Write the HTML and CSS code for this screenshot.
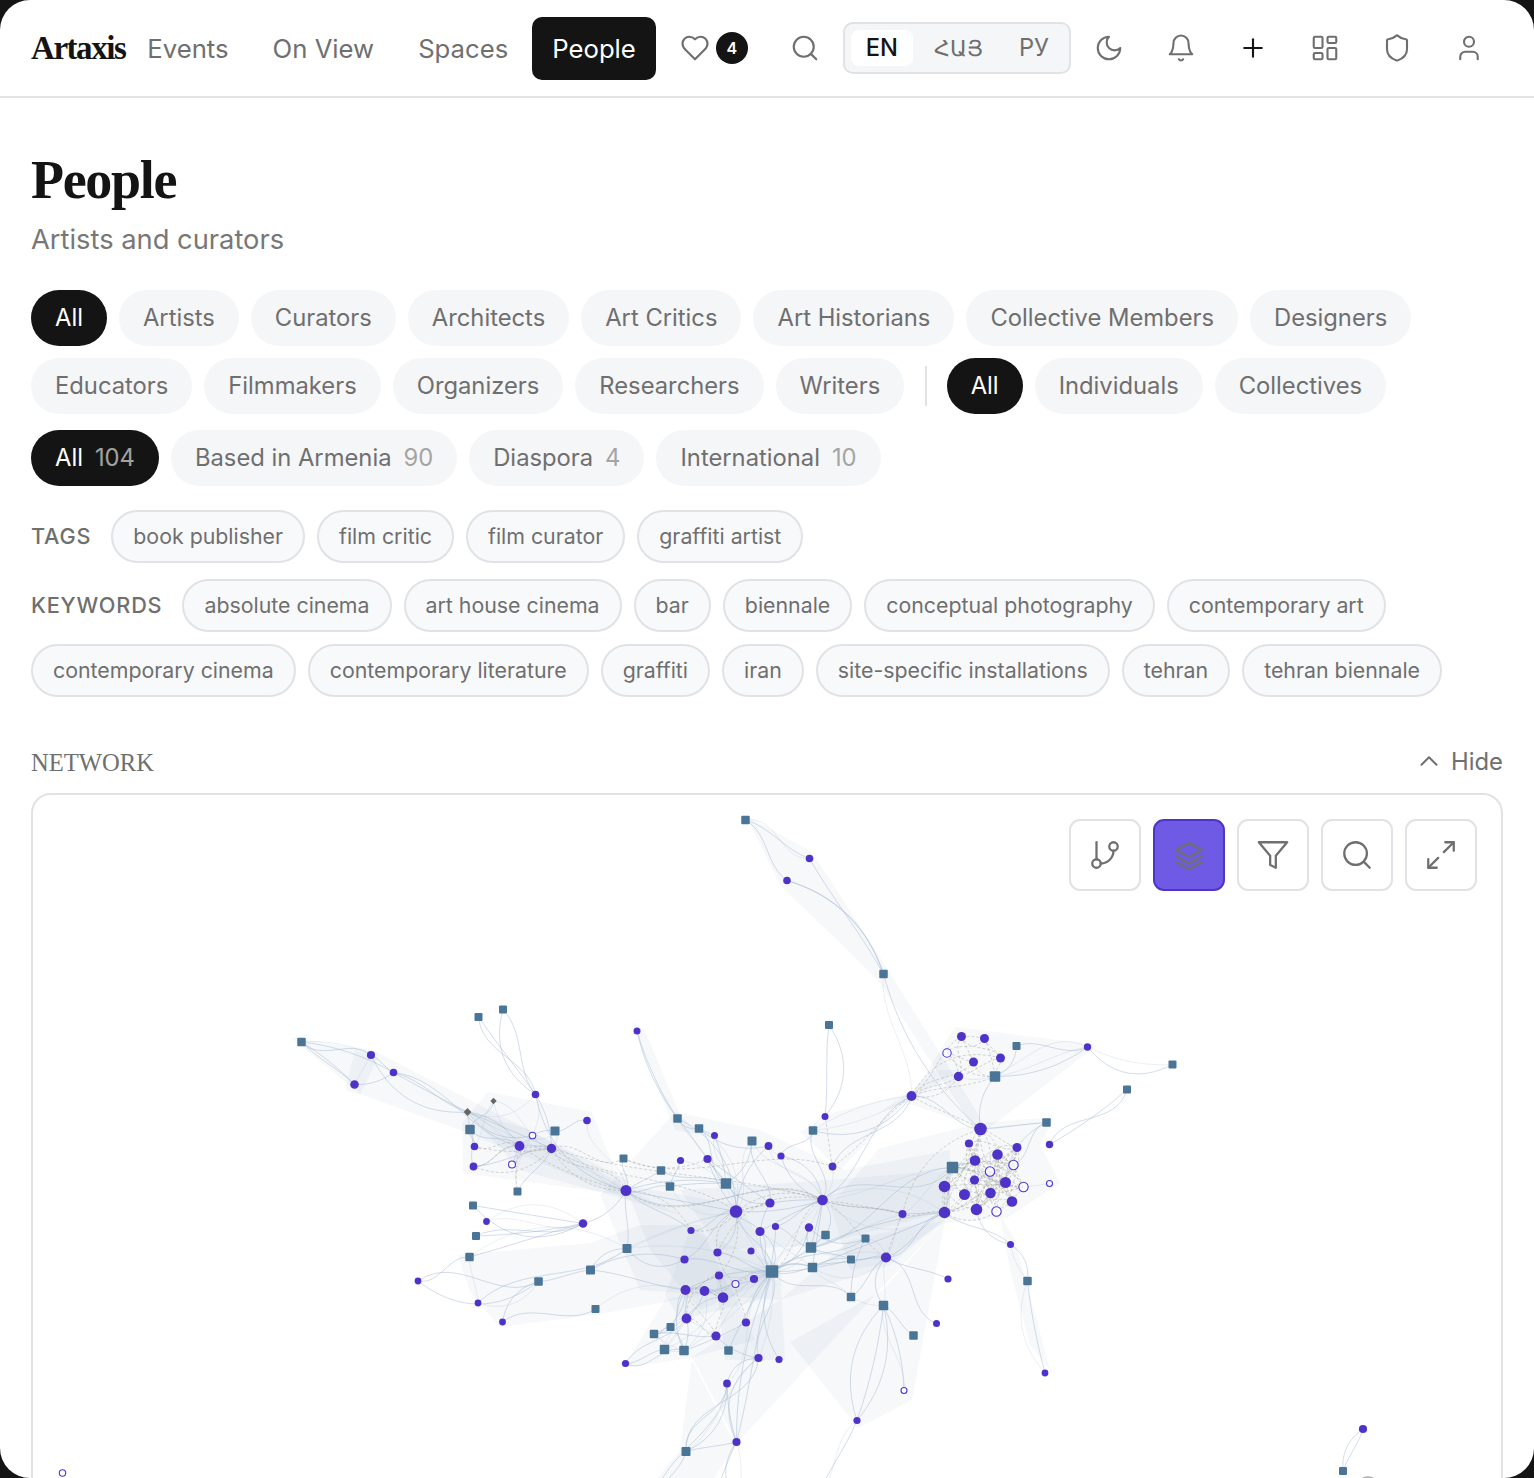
FILE: index.html
```html
<!DOCTYPE html>
<html lang="en">
<head>
<meta charset="utf-8">
<title>People – Artaxis</title>
<link rel="stylesheet" href="styles.css">
</head>
<body>
<div class="page">
  <header class="topbar">
    <a class="logo">Artaxis</a>
    <nav class="nav">
      <a class="nav-item">Events</a>
      <a class="nav-item">On View</a>
      <a class="nav-item">Spaces</a>
      <a class="nav-item active">People</a>
    </nav>
    <div class="fav">
      <svg class="icon" viewBox="0 0 24 24"><path d="M19 14c1.49-1.46 3-3.21 3-5.5A5.5 5.5 0 0 0 16.5 3c-1.76 0-3 .5-4.5 2-1.5-1.500-2.740-2-4.500-2A5.500 5.500 0 0 0 2 8.500c0 2.300 1.500 4.050 3 5.500l7 7Z"/></svg>
      <span class="badge">4</span>
    </div>
    <div class="actions">
      <button class="icon-btn"><svg class="icon" viewBox="0 0 24 24"><circle cx="11" cy="11" r="8"/><path d="m21 21-4.300-4.300"/></svg></button>
      <div class="lang">
        <span class="lang-item current">EN</span>
        <span class="lang-item hy">ՀԱՅ</span>
        <span class="lang-item">РУ</span>
      </div>
      <button class="icon-btn"><svg class="icon" viewBox="0 0 24 24"><path d="M12 3a6 6 0 0 0 9 9 9 9 0 1 1-9-9Z"/></svg></button>
      <button class="icon-btn"><svg class="icon" viewBox="0 0 24 24"><path d="M6 8a6 6 0 0 1 12 0c0 7 3 9 3 9H3s3-2 3-9"/><path d="M10.300 21a1.940 1.940 0 0 0 3.400 0"/></svg></button>
      <button class="icon-btn dark"><svg class="icon" viewBox="0 0 24 24"><path d="M5 12h14"/><path d="M12 5v14"/></svg></button>
      <button class="icon-btn"><svg class="icon" viewBox="0 0 24 24"><rect x="3" y="3" width="7" height="9" rx="1"/><rect x="14" y="3" width="7" height="5" rx="1"/><rect x="14" y="12" width="7" height="9" rx="1"/><rect x="3" y="16" width="7" height="5" rx="1"/></svg></button>
      <button class="icon-btn"><svg class="icon" viewBox="0 0 24 24"><path d="M20 13c0 5-3.500 7.500-7.660 8.950a1 1 0 0 1-.670-.010C7.500 20.500 4 18 4 13V6a1 1 0 0 1 1-1c2 0 4.500-1.200 6.240-2.720a1.170 1.170 0 0 1 1.520 0C14.510 3.810 17 5 19 5a1 1 0 0 1 1 1z"/></svg></button>
      <button class="icon-btn"><svg class="icon" viewBox="0 0 24 24"><path d="M19 21v-2a4 4 0 0 0-4-4H9a4 4 0 0 0-4 4v2"/><circle cx="12" cy="7" r="4"/></svg></button>
    </div>
  </header>

  <main class="content">
    <h1 class="title">People</h1>
    <p class="subtitle">Artists and curators</p>

    <div class="chip-row">
      <a class="chip on">All</a><a class="chip">Artists</a><a class="chip">Curators</a><a class="chip">Architects</a><a class="chip">Art Critics</a><a class="chip">Art Historians</a><a class="chip">Collective Members</a><a class="chip">Designers</a>
    </div>
    <div class="chip-row">
      <a class="chip">Educators</a><a class="chip">Filmmakers</a><a class="chip">Organizers</a><a class="chip">Researchers</a><a class="chip">Writers</a>
      <span class="divider"></span>
      <a class="chip on">All</a><a class="chip">Individuals</a><a class="chip">Collectives</a>
    </div>
    <div class="chip-row region">
      <a class="chip on">All<span class="count">104</span></a><a class="chip">Based in Armenia<span class="count">90</span></a><a class="chip">Diaspora<span class="count">4</span></a><a class="chip">International<span class="count">10</span></a>
    </div>

    <div class="tag-row tags">
      <span class="tag-label">TAGS</span>
      <a class="tag">book publisher</a><a class="tag">film critic</a><a class="tag">film curator</a><a class="tag">graffiti artist</a>
    </div>
    <div class="tag-row keywords">
      <span class="tag-label">KEYWORDS</span>
      <a class="tag">absolute cinema</a><a class="tag">art house cinema</a><a class="tag">bar</a><a class="tag">biennale</a><a class="tag">conceptual photography</a><a class="tag">contemporary art</a><a class="tag">contemporary cinema</a><a class="tag">contemporary literature</a><a class="tag">graffiti</a><a class="tag">iran</a><a class="tag">site-specific installations</a><a class="tag">tehran</a><a class="tag">tehran biennale</a>
    </div>

    <div class="section-head">
      <h2 class="section-title">NETWORK</h2>
      <button class="hide"><svg class="icon small" viewBox="0 0 24 24"><path d="m18 15-6-6-6 6"/></svg><span>Hide</span></button>
    </div>

    <section class="graph">
      <svg id="graph-svg" class="graph-svg" viewBox="33 795 1468 760" preserveAspectRatio="xMinYMin"></svg>
      <div class="tools">
        <button class="tool"><svg class="icon" viewBox="0 0 24 24"><path d="M6 3v12"/><circle cx="18" cy="6" r="3"/><circle cx="6" cy="18" r="3"/><path d="M18 9a9 9 0 0 1-9 9"/></svg></button>
        <button class="tool selected"><svg class="icon" viewBox="0 0 24 24"><path d="M12 3.500 3 8.500l9 5 9-5z"/><path d="m3 13 9 5 9-5"/><path d="m3 17 9 5 9-5"/></svg></button>
        <button class="tool"><svg class="icon" viewBox="0 0 24 24"><path d="M22 3H2l8 9.460V19l4 2v-8.540z"/></svg></button>
        <button class="tool"><svg class="icon" viewBox="0 0 24 24"><circle cx="11" cy="11" r="8"/><path d="m21 21-4.300-4.300"/></svg></button>
        <button class="tool"><svg class="icon" viewBox="0 0 24 24"><path d="M15 3h6v6"/><path d="m21 3-7 7"/><path d="m3 21 7-7"/><path d="M9 21H3v-6"/></svg></button>
      </div>
    </section>
  </main>
</div>
<script src="graph.js"></script>
</body>
</html>
```

FILE: styles.css
```css
* { box-sizing: border-box; }
html, body { margin: 0; height: 100%; }
body {
  background: #141414;
  font-family: Inter, "Noto Sans", sans-serif;
  color: #6f6f6f;
}
.page {
  height: 1478px;
  overflow: hidden;
  background: #fff;
  border-radius: 30px;
}
a { color: inherit; text-decoration: none; }
button { font: inherit; color: inherit; background: none; border: 0; padding: 0; }
.icon {
  width: 30px;
  height: 30px;
  fill: none;
  stroke: currentColor;
  stroke-width: 1.7;
  stroke-linecap: round;
  stroke-linejoin: round;
  display: block;
}
.icon.small { width: 30px; height: 30px; stroke-width: 1.6; }

.topbar {
  display: flex;
  align-items: center;
  height: 98px;
  padding: 0 29px 0 31px;
  border-bottom: 2px solid #e2e3e5;
}
.logo {
  font-family: "Liberation Serif", serif;
  font-weight: 700;
  font-size: 33px;
  letter-spacing: -1.45px;
  color: #141414;
  margin-right: 2px;
}
.nav { display: flex; gap: 4px; align-items: center; }
.nav-item {
  font-size: 25.7px;
  line-height: 63px;
  height: 63px;
  padding: 0 20px;
  border-radius: 10px;
}
.nav-item.active { background: #141414; color: #fff; }
.fav { display: flex; align-items: center; gap: 6px; margin-left: 24px; }
.badge {
  width: 32px;
  height: 32px;
  border-radius: 50%;
  background: #141414;
  color: #fff;
  font-size: 16px;
  font-weight: 600;
  display: flex;
  align-items: center;
  justify-content: center;
}
.actions { display: flex; align-items: center; margin-left: auto; }
.icon-btn {
  width: 72px;
  height: 72px;
  display: flex;
  align-items: center;
  justify-content: center;
}
.icon-btn.dark { color: #141414; }
.lang {
  display: flex;
  align-items: center;
  gap: 6px;
  height: 52px;
  padding: 6px 5px 6px 6px;
  margin: 0 2px;
  background: #f5f6f8;
  border: 2px solid #e0e2e6;
  border-radius: 10px;
  font-size: 23.7px;
}
.lang-item { padding: 0 15px; line-height: 36px; height: 36px; font-weight: 400; }
.lang-item.hy { font-size: 22px; }
.lang-item.current { background: #fff; color: #141414; border-radius: 8px; font-weight: 500; }

.content { padding: 0 31px; }
.title {
  margin: 0;
  padding-top: 52px;
  font-family: "Liberation Serif", serif;
  font-weight: 700;
  font-size: 54px;
  letter-spacing: -1.3px;
  line-height: 60px;
  color: #141414;
}
.subtitle {
  margin: 10px 0 0;
  font-size: 27.3px;
  line-height: 40px;
  color: #777;
}
.chip-row { display: flex; align-items: center; flex-wrap: wrap; gap: 12px; margin-top: 12px; }
.subtitle + .chip-row { margin-top: 30px; }
.chip-row.region { margin-top: 16px; }
.chip {
  display: flex;
  align-items: center;
  height: 56px;
  padding: 0 24px 2px;
  border-radius: 28px;
  background: #f5f6f8;
  font-size: 23.78px;
}
.chip.on { background: #141414; color: #fff; }
.count { margin-left: 12px; opacity: .6; }
.divider { width: 2px; height: 40px; margin: 0 8px 0 8.5px; background: #e0e2e6; }

.tag-row { display: flex; align-items: center; flex-wrap: wrap; gap: 12px; }
.tags { margin-top: 24px; }
.keywords { margin-top: 16px; }
.tag-label { font-size: 21.7px; font-weight: 500; letter-spacing: .8px; margin-right: 8px; padding-bottom: 2px; }
.tag {
  display: flex;
  align-items: center;
  height: 53px;
  padding: 0 20px 2px;
  border: 2px solid #e0e2e6;
  border-radius: 27px;
  background: #f8f9fb;
  font-size: 21.34px;
}

.section-head { display: flex; align-items: center; justify-content: space-between; margin-top: 47px; height: 36px; }
.section-title {
  margin: 0;
  padding-top: 2px;
  font-family: "Liberation Serif", serif;
  font-weight: 400;
  font-size: 24.600px;
  color: #6f6f6f;
}
.hide { display: flex; align-items: center; gap: 7px; font-size: 23.8px; padding-bottom: 2px; }
.graph {
  position: relative;
  height: 760px;
  margin-top: 13px;
  border: 2px solid #e0e2e6;
  border-radius: 20px;
  overflow: hidden;
}
.graph-svg { display: block; width: 1468px; height: 760px; }
.tools { position: absolute; top: 24px; right: 24px; display: flex; gap: 12px; }
.tool {
  width: 72px;
  height: 72px;
  display: flex;
  align-items: center;
  justify-content: center;
  background: #fff;
  border: 2px solid #e0e2e6;
  border-radius: 11px;
}
.tool .icon { width: 34px; height: 34px; stroke-width: 1.6; }
.tool.selected { background: #6e5ae4; border-color: #4f35c4; }

.hull { fill: #6c8bb0; fill-opacity: .06; stroke: none; }
.edge { fill: none; stroke: #9fb4d0; stroke-width: .7; stroke-opacity: .65; }
.edge.faint { stroke-opacity: .3; }
.edge.dash { stroke: #a8a49c; stroke-dasharray: 3 2; stroke-opacity: .65; }
.node-circle { fill: #4f33c8; }
.node-hollow { fill: #fff; fill-opacity: .75; stroke: #4f33dc; stroke-width: 1.100; }
.node-square { fill: #4a7596; }
.node-diamond { fill: #666; }
.node-ghost { fill: #fff; stroke: #aaa; stroke-width: 1.500; }
```

FILE: graph.js
```js
(function () {
  var NS = 'http://www.w3.org/2000/svg';
  var svg = document.getElementById('graph-svg');

  var nodes = {
    s745:[745.5,820,8], s884:[883.5,974,8], s301:[301.5,1042,8], s479:[478.5,1017,7.5], s503:[503,1009.5,7.5],
    s470:[470,1129.5,9], s555:[555,1131,8.500], s624:[623.5,1158.5,7.500], s517:[517.5,1191.5,7.500], s473:[473,1205.5,7.500],
    s476:[476,1236,7.500], s469:[469.500,1257,8], s539:[538.500,1281.500,8], s590:[590.500,1270,8.500], s627:[627,1248.500,8.500],
    s661:[661,1170.500,8], s670:[670,1186.500,8], s678:[677.500,1118.500,8], s699:[699,1128.500,8], s752:[752,1141,8.500],
    s813:[813,1130.500,8], s726:[726,1183.500,10], s829:[829,1025,7.500], s826:[825.500,1235,8], s866:[865.500,1238.500,7.500],
    s811:[811,1247.500,10], s851:[851,1259.500,7.500], s812:[812.500,1267.500,9], s772:[772,1271.500,12], s851b:[851,1297,8],
    s883:[883.500,1305.500,9], s913:[913.500,1335.500,8], s654:[654,1334,8], s670b:[670.500,1327,7.500], s665:[664.500,1349.500,9],
    s684:[684,1350.500,9], s728:[728.500,1350.500,8], s686:[686,1451.500,8.500], s595:[595.500,1309,7.500],
    s1017:[1016.500,1046,7.500], s995:[995,1076.500,10], s1173:[1172.500,1064.500,7.500], s1127:[1127,1089.500,7.500],
    s1046:[1046.500,1122.500,8], s953:[952.500,1167.500,11], s1028:[1027.500,1281,8], s1343:[1343,1471,7.500],

    c810:[809.500,858.500,3.500], c787:[787,880.500,3.500], c371:[371,1055,3.800], c393:[393.500,1072.500,3.500], c354:[354.500,1084.500,4],
    c535:[535.500,1094.500,3.500], c637:[637,1031,3.200], c587:[587,1120.500,3.500], c474:[474.500,1146.500,3.500], c519:[519.500,1146,4.600],
    c551:[551.500,1148.500,4.400], c473:[473.500,1166.500,3.600], c486:[486.500,1221.500,3.100], c583:[583,1223.500,4], c418:[418,1281,3.100],
    c626:[626,1190.500,5.200], c825:[825,1116.500,3.200], c714:[714.500,1135.500,3.200], c769:[768.500,1146,3.600], c781:[781,1156,3.300],
    c833:[832.500,1166.500,3.600], c681:[680.500,1160.500,3.300], c708:[707.500,1159,3.800], c736:[736,1211.500,6], c770:[770,1203,4.300],
    c823:[822.500,1200,5], c903:[902.500,1214,3.700], c691:[691,1230.500,3.300], c760:[760,1231.500,4.300], c776:[775.500,1226.500,3.300],
    c809:[809,1227.500,3.900], c718:[717.500,1252.500,3.800], c751:[751,1251,3.300], c685:[684.500,1259.500,3.800], c886:[886,1257.500,4.800],
    c719:[719,1275.500,3.800], c754:[754,1279,3.800], c686:[685.500,1290,4.700], c704:[704.500,1291,4.600], c723:[723,1297.500,5],
    c686b:[686.500,1318.500,4.600], c746:[746,1322.500,3.800], c716:[716,1336,4.300], c626b:[625.500,1363.500,3.300], c759:[758.500,1358,3.800],
    c779:[779,1359.500,3.300], c727:[727,1383.500,3.600], c737:[736.500,1442,3.800], c857:[857,1420.500,3.300], c937:[936.500,1323.500,3.200],
    c948:[948,1279,3.300], c478:[478,1303,3.100], c503:[502.500,1322,3.100], c1045:[1045,1373,3.100], c1363:[1363,1429,3.800],
    c962:[961.500,1036.500,4.200], c984:[984.500,1038.500,4.200], c1000:[1000.500,1058,4.200], c973:[973.500,1062,4.200], c958:[958.500,1076.500,4.400],
    c911:[911.500,1096,4.600], c1088:[1087.500,1047,3.400], c981:[980.500,1129,6], c969:[969,1143.500,3.800], c1017:[1017,1147.500,4.200],
    c1050:[1049.500,1144.500,3.400], c998:[997.500,1154.500,5], c975:[975,1160.500,5], c975b:[974.500,1180,4.300], c1006:[1005.500,1182.500,5.200],
    c944:[944.500,1186.500,5.500], c965:[964.500,1194.500,5.200], c990:[990.500,1193,5], c1012:[1012,1201.500,5], c976:[976.500,1209.500,5.500],
    c945:[944.500,1212.500,5.500], c1011:[1010.500,1244.500,3.200],

    h533:[532.500,1135.500,3.300], h512:[512,1164.500,3.500], h736:[735.500,1284,3.500], h904:[904,1390.500,3],
    h947:[947,1053,4.200], h990:[990,1171.500,4.700], h1014:[1013.500,1165,4.700], h1024:[1023.500,1187,4.700], h997:[996.500,1211.500,4.700],
    h1050:[1049.500,1183.500,3], h63:[62.500,1473,3.200],

    d467:[467.500,1112,5.500], d493:[493.500,1101,4.500],

    x1:[655,1500], x2:[712,1500], x3:[735,1500], x4:[745,1500], x5:[815,1500]
  };

  var hulls = [
    [[290,1037],[372,1050],[470,1100],[627,1180],[630,1200],[460,1130],[360,1094]],
    [[355,1050],[378,1058],[360,1095],[345,1090]],
    [[488,1092],[592,1112],[625,1195],[463,1173],[462,1123]],
    [[458,1255],[590,1243],[640,1225],[700,1225],[730,1290],[600,1314],[500,1327],[470,1292]],
    [[632,1022],[645,1030],[680,1115],[700,1135],[675,1130]],
    [[465,1110],[530,1130],[630,1190],[680,1215],[610,1195],[520,1170]],
    [[600,1195],[675,1112],[760,1130],[845,1170],[950,1150],[950,1215],[890,1265],[780,1300],[640,1290]],
    [[680,1190],[830,1180],[950,1170],[950,1210],[820,1245],[720,1250]],
    [[625,1185],[740,1205],[780,1275],[700,1310],[650,1250]],
    [[690,1230],[780,1265],[760,1300],[680,1320],[665,1295]],
    [[715,1270],[780,1265],[785,1360],[725,1360]],
    [[623,1368],[665,1300],[730,1285],[755,1340],[690,1358]],
    [[692,1357],[737,1443],[945,1220],[850,1240],[780,1300]],
    [[790,1342],[858,1428],[912,1400],[945,1220],[883,1290]],
    [[880,1148],[980,1123],[1055,1117],[1040,1145],[1060,1183],[1007,1218],[943,1223],[880,1265],[850,1270],[830,1205]],
    [[955,1027],[1097,1045],[1000,1120],[985,1130],[907,1103]],
    [[880,1112],[912,1090],[935,1070],[958,1070],[912,1100]],
    [[745,815],[812,852],[888,970],[985,1125],[975,1130],[878,980],[780,885]],
    [[800,1132],[835,1112],[915,1092],[840,1170]],
    [[1000,1215],[1015,1240],[1050,1370],[1030,1345],[1010,1270]],
    [[692,1360],[735,1445],[700,1500],[640,1500],[680,1450]]
  ];

  var blue = {
    s745:'c810 c787 c810', s884:'c810 c787 c911 c981 c787', s301:'c371 c354 c393 c371 c354', s829:'c825 c825',
    c371:'c354 d467 c393', c393:'d467 c354 d467 c519', s479:'c535 c535', s503:'c535 c535',
    c535:'c551 c626 d467 s517', c637:'s678 s678', c587:'s555 c626', s555:'c551 c519 h533',
    d467:'s470 c519 c551 c474 h533 c626 c519', d493:'s470 c519 c551 c474',
    s470:'c519 c474 c473', c519:'c551 c473 h512 h533', c551:'s517 c473 c626',
    c583:'s473 c486 s476 s469 c626 s473 c486 s476', c418:'s539 s469 s539', s539:'s590 c478', s469:'s627 c478',
    s590:'s627 c685 c686 c736', c478:'s627', c503:'s595 s539', s595:'c686',
    s627:'c626 c685 s772 c736', c626:'s624 s661 s670 s726 c736 c691 c823', s670:'s726 c736 c681', s661:'s726',
    s726:'c736 s699 c708 s678 c770 c823 c714 s752', c736:'s678 s699 c708 c681 c714 c770 c760 c718 c691 c685 s772 c823 c769',
    s678:'c708 s699', s699:'c714 c769', c708:'c770', s752:'c770 c736', c769:'c781 c823', c781:'c823',
    c823:'s752 c781 c770 c809 s826 s812 s811 c903 s813 c833 c776 c760', s813:'c825 c911 c911 c781',
    s772:'c760 c776 c809 c754 c751 c718 c719 c685 c686 c704 c723 c746 c759 c779 s811 s812 s851 c727 s728 c737 s684 s665 s866 s851b c886 s826 c770 c736 c759 s812 h736 c823 c809',
    s811:'c809 c776 s826 c886 s851 c903', s812:'c886 s851 s851b c760', c886:'s851 s866 s851b s883 c945 c903 c948 c937 s883 c945',
    s883:'c857 c857 h904 s913 s851b h904', c945:'c903 s953 s812 s772 c823 c823', s953:'c944 c975 c823 s811 c981 c823 c1006 c903',
    c911:'c833 s813 c823 c981', s995:'c1088 s1017 c1088', c1088:'s1173 s1173 s1017 c958', c981:'s1046 s1046 s995',
    s1127:'c1050 c1050', s1046:'h1014 c1006', h1050:'h1024', c1011:'c976 s1028 s1028 c945', s1028:'c1045 c1045', c1363:'s1343 s1343',
    c626b:'s684 c686b s665', s686:'c727 c737 c759 x1 c727 c759', c737:'x2 x3 x4 c727 s772 c759', c857:'x5 x5 s883', c727:'c759 x1', s684:'c746',
    c716:'c759 s772', c760:'s772', s866:'s851b c809'
  };
  var dashed = {
    c736:'c551 c718 c823 c719 c770 c770', c626:'c823 c551 c519 c551', c823:'c903 s772 c886', s624:'c833 c708 c551', c903:'c886 c981 c823 c945',
    c551:'c519 h512 c474 c473 c823', c519:'h512 c474 c473 s517', c833:'c825 c911', c718:'h736 c823', h736:'c723 c754 c746', c691:'c626 c736', c911:'c973 c958 c981 c958'
  };
  var cliques = [
    { cls: 'dash', keys: 'c981 c969 c1017 c998 c975 s953 h990 h1014 c975b c1006 c944 c965 c990 c1012 c976 c945 h1024 h997' },
    { cls: 'dash', keys: 'c962 c984 c1000 c973 c958 s995 h947 c911' },
    { cls: '', keys: 'c686 c704 c723 c686b s654 s670b s665 s684 c716' },
    { cls: 'dash', keys: 'c686 c704 c723 c686b c716 c719' }
  ];

  var seed = 7;
  function rnd() { seed = (seed * 16807) % 2147483647; return seed / 2147483647; }

  function el(name, attrs) {
    var e = document.createElementNS(NS, name);
    for (var k in attrs) e.setAttribute(k, attrs[k]);
    svg.appendChild(e);
    return e;
  }

  function edge(a, b, cls) {
    var p = nodes[a], q = nodes[b];
    if (!p || !q) return;
    var dx = q[0] - p[0], dy = q[1] - p[1];
    var b1 = (rnd() - 0.5) * 0.55, b2 = rnd() < 0.5 ? b1 : -b1 * 0.8;
    var c1x = p[0] + dx * 0.33 - dy * b1, c1y = p[1] + dy * 0.33 + dx * b1;
    var c2x = p[0] + dx * 0.67 - dy * b2, c2y = p[1] + dy * 0.67 + dx * b2;
    var fade = rnd() < 0.3 ? ' faint' : '';
    el('path', {
      'class': 'edge ' + cls + fade,
      d: 'M' + p[0] + ' ' + p[1] + 'C' + c1x.toFixed(1) + ' ' + c1y.toFixed(1) + ' ' + c2x.toFixed(1) + ' ' + c2y.toFixed(1) + ' ' + q[0] + ' ' + q[1]
    });
  }

  hulls.forEach(function (h) {
    el('polygon', { 'class': 'hull', points: h.map(function (p) { return p.join(','); }).join(' ') });
  });
  Object.keys(blue).forEach(function (a) {
    blue[a].split(' ').forEach(function (b) { edge(a, b, ''); });
  });
  Object.keys(dashed).forEach(function (a) {
    dashed[a].split(' ').forEach(function (b) { edge(a, b, 'dash'); });
  });
  cliques.forEach(function (c) {
    var k = c.keys.split(' ');
    for (var i = 0; i < k.length; i++) {
      for (var j = i + 1; j < k.length; j++) {
        if (rnd() < 0.62) edge(k[i], k[j], c.cls);
      }
    }
  });

  Object.keys(nodes).forEach(function (key) {
    var n = nodes[key], t = key.charAt(0), x = n[0], y = n[1], s = n[2];
    if (t === 'c') el('circle', { 'class': 'node-circle', cx: x, cy: y, r: s + 0.3 });
    if (t === 'h') el('circle', { 'class': 'node-hollow', cx: x, cy: y, r: s });
    if (t === 's') el('rect', { 'class': 'node-square', x: x - s / 2 - 0.25, y: y - s / 2 - 0.25, width: s + 0.5, height: s + 0.5, rx: 1 });
    if (t === 'd') el('rect', { 'class': 'node-diamond', x: x - s / 2, y: y - s / 2, width: s, height: s, transform: 'rotate(45 ' + x + ' ' + y + ')' });
  });
  el('circle', { 'class': 'node-ghost', cx: 1368, cy: 1488, r: 11 });
})();
```
